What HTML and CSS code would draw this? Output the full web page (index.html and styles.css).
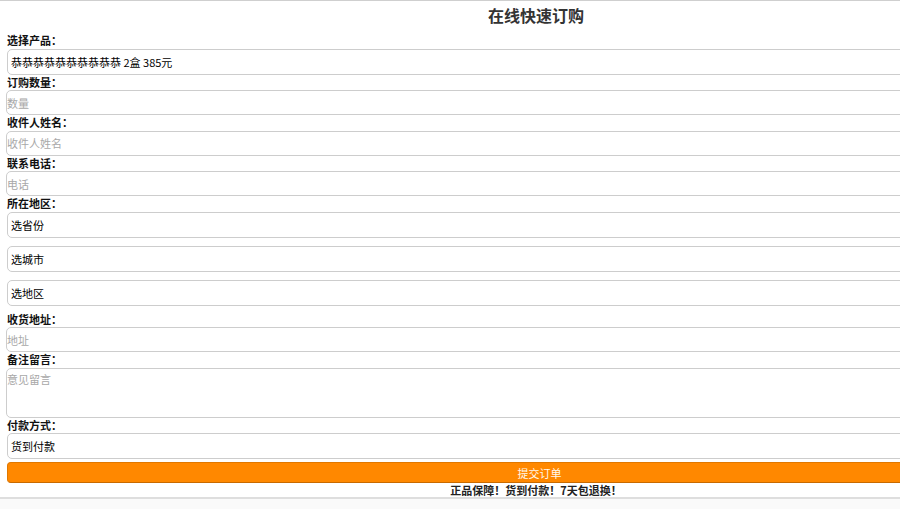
FILE: index.html
```html
<!DOCTYPE html>
<html lang="zh-CN">
<head>
<meta charset="utf-8">
<title>在线快速订购</title>
<link rel="stylesheet" href="styles.css">
</head>
<body>
<div class="order">
  <h2 class="title">在线快速订购</h2>
  <form class="form">
    <label class="lbl">选择产品：</label>
    <select class="sel"><option>恭恭恭恭恭恭恭恭恭恭 2盒 385元</option></select>
    <label class="lbl">订购数量：</label>
    <input class="inp" type="text" placeholder="数量">
    <label class="lbl">收件人姓名：</label>
    <input class="inp" type="text" placeholder="收件人姓名">
    <label class="lbl">联系电话：</label>
    <input class="inp" type="text" placeholder="电话">
    <label class="lbl">所在地区：</label>
    <select class="sel region"><option>选省份</option></select>
    <select class="sel region"><option>选城市</option></select>
    <select class="sel region last"><option>选地区</option></select>
    <label class="lbl">收货地址：</label>
    <input class="inp" type="text" placeholder="地址">
    <label class="lbl">备注留言：</label>
    <textarea class="txt" placeholder="意见留言"></textarea>
    <label class="lbl">付款方式：</label>
    <select class="sel"><option>货到付款</option></select>
    <button class="btn" type="button">提交订单</button>
    <p class="note">正品保障！货到付款！7天包退换！</p>
  </form>
</div>
<div class="after"></div>
</body>
</html>
```
FILE: styles.css
```css
html, body {
  margin: 0;
  padding: 0;
  background: #fff;
  overflow: hidden;
  font-family: "Noto Sans CJK SC", "DejaVu Sans", sans-serif;
  font-size: 11px;
  color: #000;
}
.order {
  width: 1072px;
  border-top: 1px solid #cfcfcf;
}
.title {
  margin: 0;
  height: 32px;
  line-height: 29px;
  text-align: center;
  font-size: 16px;
  font-weight: bold;
  color: #333;
}
.form {
  display: flex;
  flex-direction: column;
  padding-left: 6px;
}
.lbl {
  display: block;
  height: 15.5px;
  line-height: 14px;
  padding-left: 1px;
  font-weight: bold;
  color: #111;
}
.sel {
  appearance: none;
  -webkit-appearance: none;
  box-sizing: border-box;
  height: 26px;
  margin: 0 0 0 1px;
  padding: 0 0 0 3px;
  border: 1px solid #cdcdcd;
  border-radius: 5px;
  background: #fff;
  font-family: inherit;
  font-size: 11px;
  color: #000;
}
.region {
  margin-bottom: 8px;
}
.region.last {
  margin-bottom: 6px;
}
.inp {
  box-sizing: border-box;
  height: 25px;
  margin: 0;
  padding: 0;
  border: 1px solid #cdcdcd;
  border-radius: 5px;
  background: #fff;
  font-family: inherit;
  font-size: 11px;
}
.txt {
  box-sizing: border-box;
  height: 50px;
  margin: 0;
  padding: 2px 0 0 0;
  border: 1px solid #cdcdcd;
  border-radius: 5px;
  background: #fff;
  font-family: inherit;
  font-size: 11px;
  resize: none;
}
.inp::placeholder, .txt::placeholder {
  color: #a8a8a8;
}
.btn {
  box-sizing: border-box;
  height: 21px;
  margin: 3px 0 0 1px;
  padding: 0;
  border: 1px solid #e07800;
  border-bottom-color: #c86a00;
  border-radius: 4px;
  background: #ff8800;
  color: #fff8ee;
  font-family: inherit;
  font-size: 11px;
}
.note {
  margin: 0 0 0 -6px;
  height: 14px;
  line-height: 14px;
  text-align: center;
  font-weight: bold;
  color: #222;
}
.after {
  height: 20px;
  border-top: 2px solid #dedede;
  background: #fafafa;
}
```
